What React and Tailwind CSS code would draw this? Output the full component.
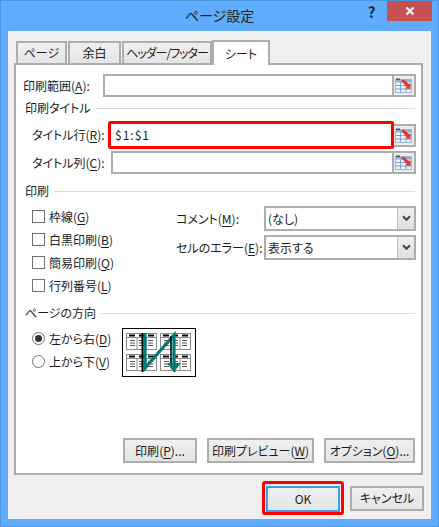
const FONT = "font-['Noto_Sans_CJK_JP','Noto_Sans_CJK_SC',sans-serif] [font-feature-settings:'palt']";

function RangeIcon() {
  return (
    <svg width="18" height="16" viewBox="0 0 18 16" className="block">
      <rect x="0.5" y="1.5" width="16" height="13" fill="#eef3fa" stroke="#9db4d2" />
      <rect x="1" y="2" width="15" height="2.5" fill="#8fb0da" />
      <path d="M1 7.5H16M1 11H16M5.5 4V14M11 4V14" stroke="#7da0cf" strokeWidth="1" fill="none" />
      <rect x="1" y="0.5" width="4" height="1.5" fill="#555555" />
      <path d="M6 3L8.5 1.5L14 6L15.5 5.5V11L10.5 10.5L12 9Z" fill="#e0392c" />
    </svg>
  );
}

function RangeButton({ className = "" }) {
  return (
    <button className={`w-[22px] flex items-center justify-center border-2 border-l-0 border-[#adadad] bg-[#ececec] ${className}`}>
      <RangeIcon />
    </button>
  );
}

function Acc({ text, k, tail = "" }) {
  return (
    <span className="whitespace-nowrap">
      {text}(<span className="underline underline-offset-2">{k}</span>){tail}
    </span>
  );
}

function Heading({ children, className = "" }) {
  return (
    <div className={`flex items-center h-4 pl-[9px] pr-[6px] text-xs ${className}`}>
      <span className="whitespace-nowrap mr-[5px]">{children}</span>
      <div className="flex-1 h-px bg-[#dcdcdc]" />
    </div>
  );
}

function Check({ text, k }) {
  return (
    <div className="flex items-center h-[23px] text-xs">
      <div className="w-[13px] h-[13px] border border-[#707070] bg-white shrink-0 mr-1" />
      <Acc text={text} k={k} />
    </div>
  );
}

function Radio({ text, k, on }) {
  return (
    <div className="flex items-center h-[23px] text-xs">
      <div className="w-[13px] h-[13px] rounded-full border border-[#707070] bg-white shrink-0 mr-1 flex items-center justify-center">
        {on && <div className="w-[7px] h-[7px] rounded-full bg-[#333333]" />}
      </div>
      <Acc text={text} k={k} />
    </div>
  );
}

function Select({ value, className = "" }) {
  return (
    <div className={`w-[152px] flex border-2 border-[#adadad] bg-white text-xs ${className}`}>
      <div className="flex-1 flex items-center pl-0.5">{value}</div>
      <div className="w-[17px] flex items-center justify-center border-l border-[#bdbdbd] bg-linear-to-b from-[#f0f0f0] to-[#e0e0e0]">
        <svg width="9" height="7" viewBox="0 0 9 7">
          <path d="M1 1.2L4.5 4.8L8 1.2" stroke="#444444" strokeWidth="2" fill="none" />
        </svg>
      </div>
    </div>
  );
}

function Btn({ className = "", children }) {
  return (
    <button className={`flex items-center justify-center border-2 border-[#adadad] bg-linear-to-b from-[#f0f0f0] to-[#e5e5e5] text-xs ${className}`}>
      {children}
    </button>
  );
}

function Mini({ x, y }) {
  return (
    <g transform={`translate(${x} ${y})`}>
      <rect x="0.5" y="0.5" width="30" height="16" fill="#ffffff" stroke="#8a8a8a" />
      <path d="M1 4.5H30" stroke="#8a8a8a" />
      <path d="M3 2.5H9M13 2.5H18M22 2.5H28" stroke="#000000" strokeWidth="2" />
      <path d="M4 7.5H9M4 10H9M4 12.5H9M13 7.5H18M13 10H18M13 12.5H18M22 7.5H27M22 10H27M22 12.5H27" stroke="#555555" />
      <path d="M11 5V16M20 5V16" stroke="#8a8a8a" />
    </g>
  );
}

function Preview() {
  return (
    <svg width="74" height="49" viewBox="0 0 74 49" className="block shrink-0 ml-[90px]">
      <rect x="0.5" y="0.5" width="73" height="48" fill="#ffffff" stroke="#000000" />
      <Mini x={4} y={5} />
      <Mini x={38} y={5} />
      <Mini x={4} y={26} />
      <Mini x={38} y={26} />
      <path d="M20.5 5V44" stroke="#000000" strokeWidth="2" />
      <path d="M23 5V40L52 7V36" stroke="#007a7a" strokeWidth="3.2" fill="none" />
      <path d="M49 8V37M49 37L53 44" stroke="#000000" strokeWidth="1.5" fill="none" />
      <path d="M45 35H59L52 44Z" fill="#007a7a" />
    </svg>
  );
}

function Tab({ w, className = "", children }) {
  return (
    <div className={`${w} h-[22px] mr-px flex items-center justify-center border-2 border-b-0 border-[#adadad] bg-linear-to-b from-[#f0f0f0] to-[#e5e5e5] text-xs whitespace-nowrap ${className}`}>
      {children}
    </div>
  );
}

export default function App() {
  return (
    <div className={`w-[439px] h-[527px] flex flex-col border border-[#4a94dc] bg-[#5eacfb] text-[#1c1c1c] ${FONT}`}>
      <div className="h-[30px] shrink-0 flex items-start">
        <div className="flex-1 pl-[74px] pt-[4px] text-center text-[14px] leading-5 text-[#222222]">ページ設定</div>
        <div className="w-[15px] pt-[3px] mr-[8px] text-[15px] leading-4 font-bold text-[#222222] text-center">?</div>
        <div className="w-[45px] h-5 mr-[6px] flex items-center justify-center bg-[#c75050]">
          <svg width="10" height="10" viewBox="0 0 10 10">
            <path d="M1.5 1.5L8.5 8.5M8.5 1.5L1.5 8.5" stroke="#ffffff" strokeWidth="2" />
          </svg>
        </div>
      </div>

      <div className="w-[423px] h-[488px] ml-[7px] bg-[#f0f0f0] pl-[6px] flex flex-col">
        <div className="h-[32px] flex items-end pl-0.5 shrink-0">
          <Tab w="w-[51px]">ページ</Tab>
          <Tab w="w-[53px]">余白</Tab>
          <Tab w="w-[90px]" className="tracking-[-1px]">ヘッダー/フッター</Tab>
          <div className="w-[58px] h-[25px] -mb-0.5 -ml-px relative flex items-center justify-center border-2 border-b-0 border-[#adadad] bg-white text-xs">
            シート
          </div>
        </div>

        <div className="w-[409px] h-[412px] border-2 border-[#adadad] bg-white flex flex-col pt-[9px]">
          <div className="flex h-[23px] items-stretch">
            <div className="w-[87px] pl-[7px] flex items-center text-xs"><Acc text="印刷範囲" k="A" tail=":" /></div>
            <div className="w-[291px] border-2 border-[#adadad] bg-white" />
            <RangeButton />
          </div>

          <Heading className="mt-[3px]">印刷タイトル</Heading>

          <div className="flex mt-[5px] h-[28px]">
            <div className="w-[92px] pl-[16px] flex items-center text-xs"><Acc text="タイトル行" k="R" tail=":" /></div>
            <div className="w-[286px] border-[3px] border-[#ff0000] rounded-[2px] bg-white flex items-center pl-1 text-xs tracking-[1px]">$1:$1</div>
            <RangeButton className="mt-[3px] mb-[2px]" />
          </div>

          <div className="flex mt-0.5 h-[23px]">
            <div className="w-[95px] pl-[16px] flex items-center text-xs"><Acc text="タイトル列" k="C" tail=":" /></div>
            <div className="w-[283px] border-2 border-[#adadad] bg-white" />
            <RangeButton />
          </div>

          <Heading className="mt-[9px]">印刷</Heading>

          <div className="flex mt-[5px]">
            <div className="w-[160px] pl-4 pt-px flex flex-col">
              <Check text="枠線" k="G" />
              <Check text="白黒印刷" k="B" />
              <Check text="簡易印刷" k="Q" />
              <Check text="行列番号" k="L" />
            </div>
            <div className="flex flex-col pt-0.5 text-xs">
              <div className="flex h-[25px]">
                <div className="w-[88px] flex items-center"><Acc text="コメント" k="M" tail=":" /></div>
                <Select value="(なし)" />
              </div>
              <div className="flex h-[25px] mt-[4px]">
                <div className="w-[88px] flex items-center"><Acc text="セルのエラー" k="E" tail=":" /></div>
                <Select value="表示する" />
              </div>
            </div>
          </div>

          <Heading className="mt-[8px]">ページの方向</Heading>

          <div className="flex mt-[7px] pl-4 h-[49px]">
            <div className="flex flex-col w-[0px] -mt-px">
              <Radio text="左から右" k="D" on />
              <Radio text="上から下" k="V" />
            </div>
            <Preview />
          </div>

          <div className="flex mt-[61px] pl-[107px]">
            <Btn className="w-[74px] h-[25px]"><Acc text="印刷" k="P" tail="..." /></Btn>
            <Btn className="w-[107px] h-[25px] ml-[10px]"><Acc text="印刷プレビュー" k="W" /></Btn>
            <Btn className="w-[91px] h-[25px] ml-[10px]"><Acc text="オプション" k="O" tail="..." /></Btn>
          </div>
        </div>

        <div className="flex mt-[6px] pl-[248px] items-center">
          <div className="w-[82px] h-[34px] p-px border-[3px] border-[#ff0000] rounded-[3px]">
            <button className="w-full h-full border-2 border-[#3c9cf0] bg-linear-to-b from-[#f0f0f0] to-[#e5e5e5] text-xs">OK</button>
          </div>
          <Btn className="w-[74px] h-[25px] ml-[6px]">キャンセル</Btn>
        </div>
      </div>
    </div>
  );
}
